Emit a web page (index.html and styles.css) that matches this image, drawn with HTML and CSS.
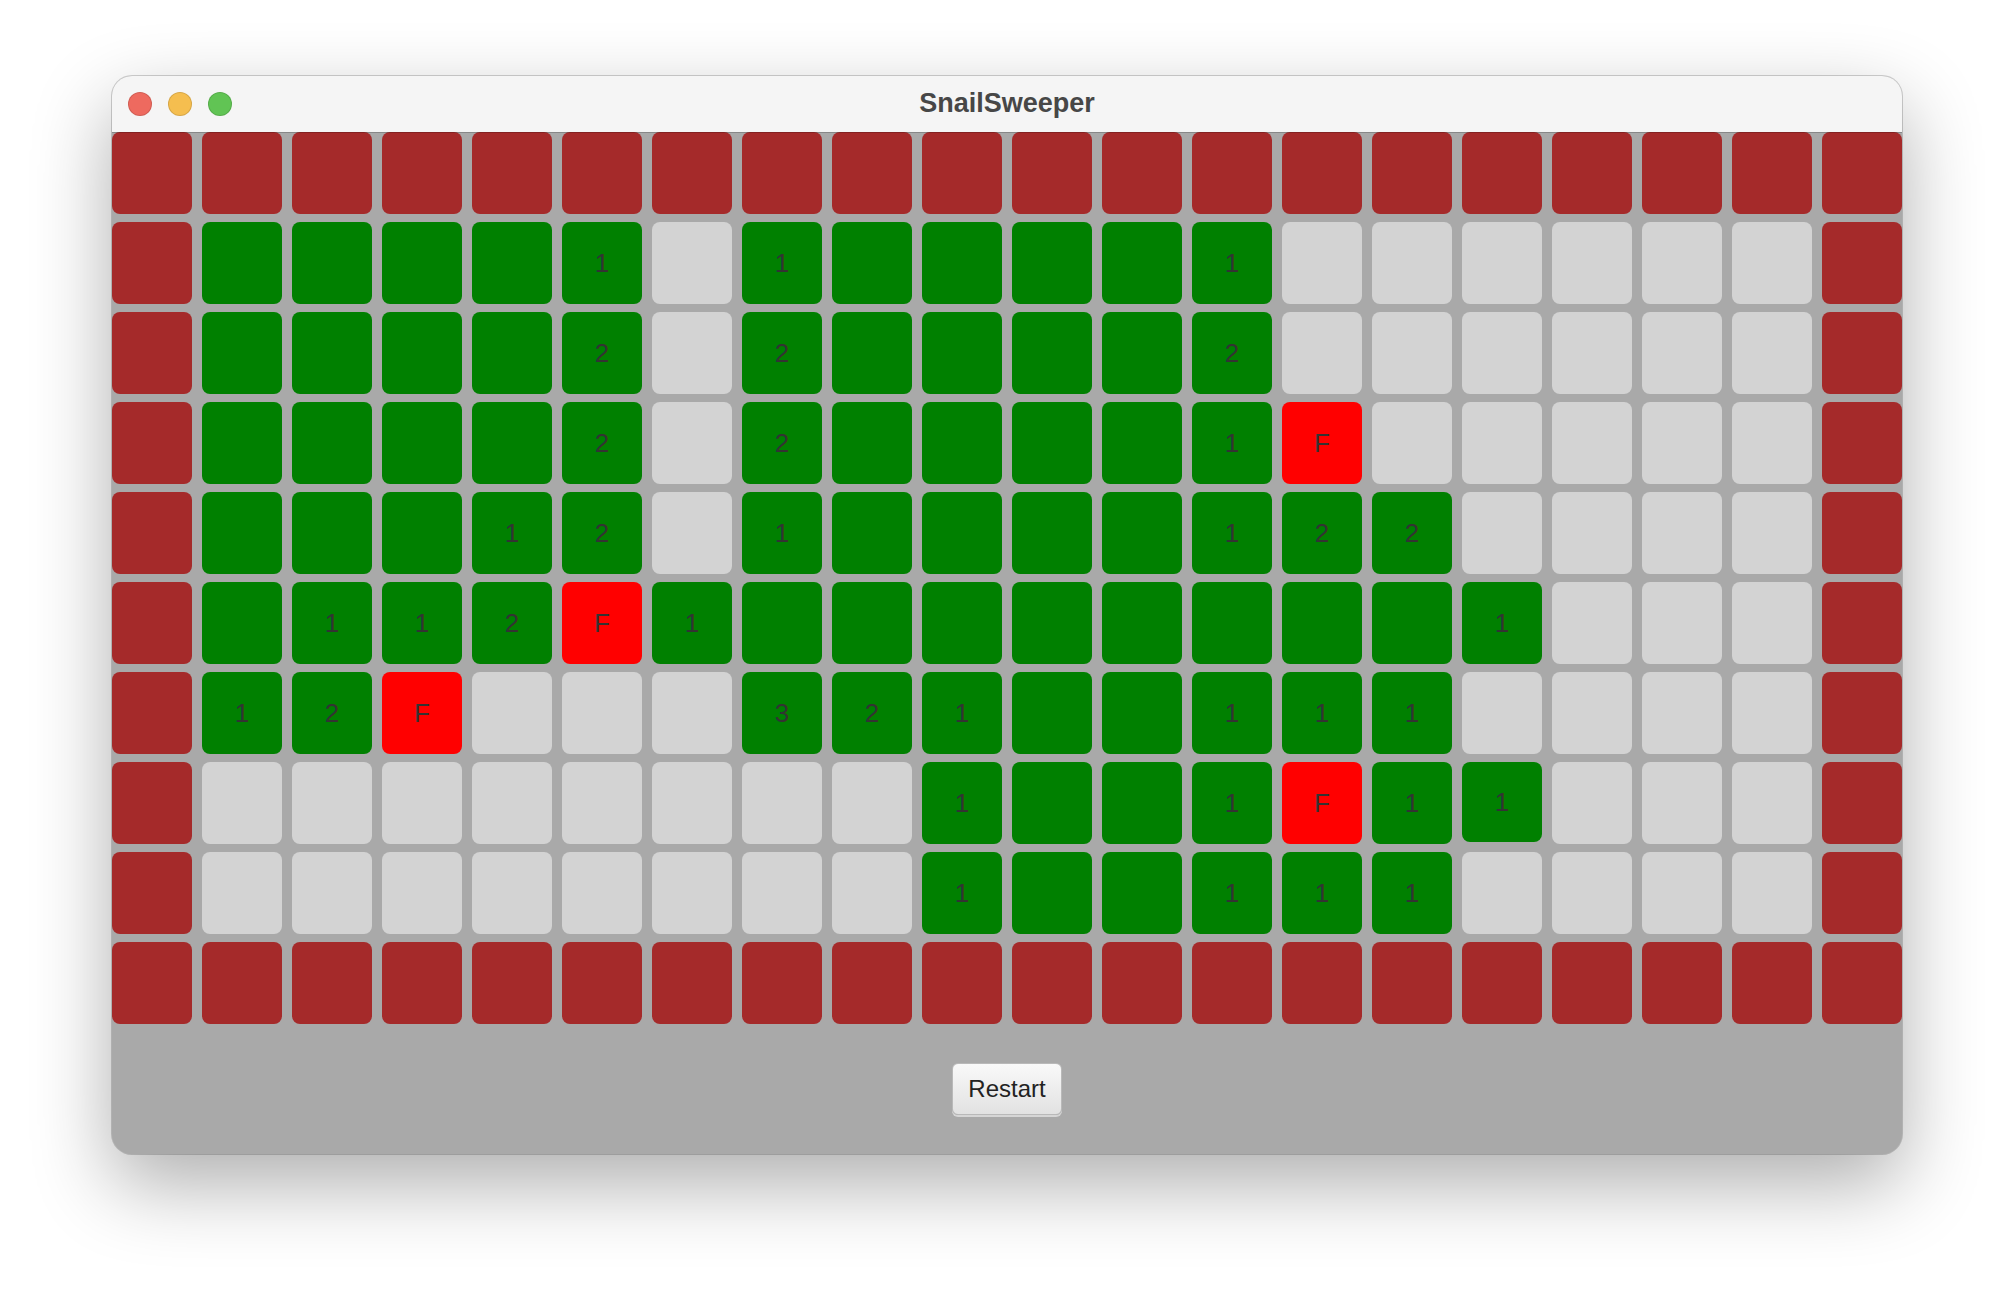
FILE: index.html
```html
<!DOCTYPE html>
<html lang="en">
<head>
  <meta charset="UTF-8">
  <title>SnailSweeper</title>
  <link rel="stylesheet" href="styles.css">
</head>
<body>

  <div class="window">
    <div class="titlebar">
      <div class="lights">
        <span class="light close"></span>
        <span class="light min"></span>
        <span class="light max"></span>
      </div>
      <div class="title">SnailSweeper</div>
    </div>

    <div id="board" class="board"></div>

    <div class="footer">
      <button id="restartBtn" class="restart">Restart</button>
    </div>
  </div>

  <script>
    // B = wall, G = grass, L = open, F = flag, digits = grass with count, o = odd short cell
    const rows = [
      "BBBBBBBBBBBBBBBBBBBB",
      "BGGGG1L1GGGG1LLLLLLB",
      "BGGGG2L2GGGG2LLLLLLB",
      "BGGGG2L2GGGG1FLLLLLB",
      "BGGG12L1GGGG122LLLLB",
      "BG112F1GGGGGGGG1LLLB",
      "B12FLLL321GG111LLLLB",
      "BLLLLLLLL1GG1F1oLLLB",
      "BLLLLLLLL1GG111LLLLB",
      "BBBBBBBBBBBBBBBBBBBB"
    ];

    const board = document.getElementById('board');

    rows.forEach(row => {
      for (const ch of row) {
        const cell = document.createElement('div');
        cell.className = 'cell';
        if (ch === 'B') {
          cell.classList.add('wall');
        } else if (ch === 'L') {
          cell.classList.add('open');
        } else if (ch === 'F') {
          cell.classList.add('flag');
          cell.textContent = 'F';
        } else if (ch === 'o') {
          cell.classList.add('grass', 'short');
          cell.textContent = '1';
        } else {
          cell.classList.add('grass');
          if (ch !== 'G') cell.textContent = ch;
        }
        board.appendChild(cell);
      }
    });
  </script>
</body>
</html>
```

FILE: styles.css
```css
html, body {
  margin: 0;
  background-color: #ffffff;
}

body {
  box-sizing: border-box;
  min-height: 1302px;
  padding: 76px 0 0 112px;
  font-family: "Liberation Sans", Arial, sans-serif;
}

.window {
  width: 1790px;
  border-radius: 20px;
  overflow: hidden;
  background-color: #a9a9a9;
  box-shadow: 0 0 0 1px rgba(0,0,0,0.18), 0 30px 80px rgba(0,0,0,0.32);
}

.titlebar {
  height: 56px;
  display: flex;
  align-items: center;
  justify-content: center;
  background-color: #f5f5f5;
  position: relative;
}

.lights {
  position: absolute;
  left: 16px;
  top: 16px;
  display: flex;
  gap: 16px;
}

.light {
  width: 22px;
  height: 22px;
  border-radius: 50%;
  border: 1px solid rgba(0,0,0,0.12);
}

.close { background-color: #ee6a5f; }
.min { background-color: #f5be4f; }
.max { background-color: #61c454; }

.title {
  font-size: 27px;
  font-weight: bold;
  color: #474747;
  margin-top: -2px;
}

.board {
  position: relative;
  display: grid;
  grid-template-columns: repeat(20, 80px);
  grid-auto-rows: 82px;
  column-gap: 10px;
  row-gap: 8px;
}

.board::after {
  content: "";
  position: absolute;
  left: 0;
  right: 0;
  top: 0;
  height: 1px;
  background: rgba(0,0,0,0.2);
}

.cell {
  border-radius: 8px;
  display: flex;
  align-items: center;
  justify-content: center;
  font-size: 26px;
  color: #333333;
}

.wall { background-color: #a52a2a; }
.grass { background-color: #008000; }
.open { background-color: #d3d3d3; }
.flag { background-color: #ff0000; }

.short {
  height: 80px;
  align-self: start;
}

.footer {
  height: 130px;
  display: flex;
  align-items: center;
  justify-content: center;
}

.restart {
  width: 110px;
  height: 52px;
  font-family: "Liberation Sans", Arial, sans-serif;
  font-size: 24px;
  color: #222222;
  background: linear-gradient(#f9f9f9, #e2e2e2);
  border: 1px solid #b9b9b9;
  border-radius: 6px;
  box-shadow: 0 2px 0 #d6d6d6;
  cursor: pointer;
}
```
